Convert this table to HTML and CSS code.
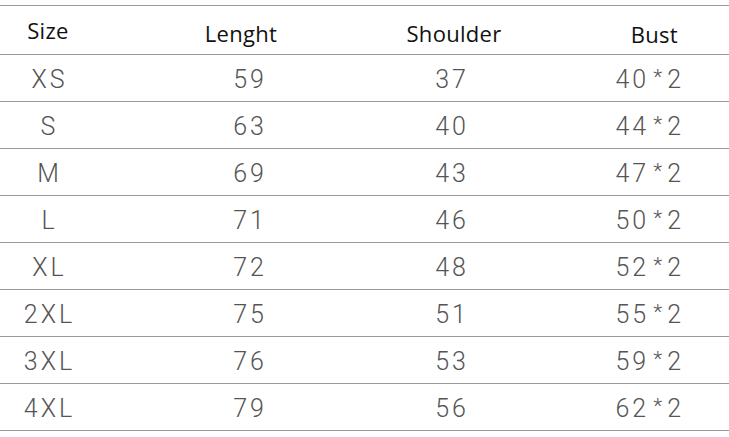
FILE: index.html
```html
<!DOCTYPE html>
<html>
<head>
<meta charset="utf-8">
<link rel="stylesheet" href="styles.css">
</head>
<body>
<div class="table">
  <div class="row head">
    <div class="cell c1"><span class="h-size">Size</span></div>
    <div class="cell c2"><span class="h-len">Lenght</span></div>
    <div class="cell c3"><span class="h-sh">Shoulder</span></div>
    <div class="cell c4"><span class="h-bust">Bust</span></div>
  </div>
  <div class="row"><div class="cell c1">XS</div><div class="cell c2">59</div><div class="cell c3">37</div><div class="cell c4">40<span class="x">*</span>2</div></div>
  <div class="row"><div class="cell c1">S</div><div class="cell c2">63</div><div class="cell c3">40</div><div class="cell c4">44<span class="x">*</span>2</div></div>
  <div class="row"><div class="cell c1">M</div><div class="cell c2">69</div><div class="cell c3">43</div><div class="cell c4">47<span class="x">*</span>2</div></div>
  <div class="row"><div class="cell c1">L</div><div class="cell c2">71</div><div class="cell c3">46</div><div class="cell c4">50<span class="x">*</span>2</div></div>
  <div class="row"><div class="cell c1">XL</div><div class="cell c2">72</div><div class="cell c3">48</div><div class="cell c4">52<span class="x">*</span>2</div></div>
  <div class="row"><div class="cell c1">2XL</div><div class="cell c2">75</div><div class="cell c3">51</div><div class="cell c4">55<span class="x">*</span>2</div></div>
  <div class="row"><div class="cell c1">3XL</div><div class="cell c2">76</div><div class="cell c3">53</div><div class="cell c4">59<span class="x">*</span>2</div></div>
  <div class="row"><div class="cell c1">4XL</div><div class="cell c2">79</div><div class="cell c3">56</div><div class="cell c4">62<span class="x">*</span>2</div></div>
</div>
</body>
</html>
```
FILE: styles.css
```css
html, body {
  margin: 0;
  padding: 0;
  background: #fff;
}
.table {
  padding-top: 5px;
  width: 729px;
}
.row {
  display: grid;
  grid-template-columns: 96px 308px 96px 1fr;
  height: 46px;
  border-bottom: 1px solid #9a9a9a;
  align-items: center;
  font-family: Roboto, "Liberation Sans", sans-serif;
  font-weight: 300;
  font-size: 25px;
  letter-spacing: 3px;
  color: #555;
}
.row.head {
  border-top: 1px solid #9a9a9a;
  height: 48px;
  font-family: "Open Sans", "Noto Sans", sans-serif;
  font-weight: 400;
  font-size: 22px;
  letter-spacing: 0.3px;
  color: #111;
  align-items: start;
}
.cell {
  display: flex;
  justify-content: center;
  white-space: nowrap;
  padding-top: 3px;
}
.head .cell { padding-top: 0; }
.row .c1 { padding-left: 3px; }
.row .c4 {
  justify-content: flex-end;
  padding-right: 45px;
}
.head .c4 { padding-right: 51px; }
.x {
  font-size: 21px;
  margin: 0 2px 0 4px;
  align-self: flex-start;
  position: relative;
  top: 0;
}
.h-size { margin-top: 9px; margin-left: -3px; }
.h-len { margin-top: 12px; margin-right: 18px; }
.h-sh { margin-top: 12px; margin-left: 4px; }
.h-bust { margin-top: 13px; }
```
